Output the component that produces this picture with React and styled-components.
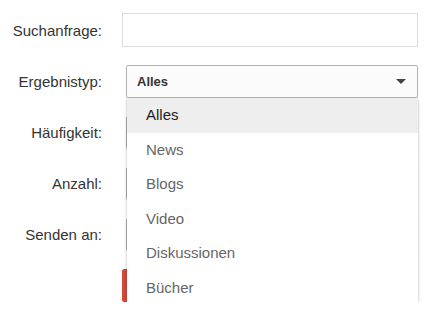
import React from 'react';
import styled, { createGlobalStyle } from 'styled-components';

const Global = createGlobalStyle`
  html, body {
    margin: 0;
    padding: 0;
    background: #fff;
  }
  body {
    font-family: Arial, "Liberation Sans", sans-serif;
  }
`

const Form = styled.div`
  position: relative;
  display: flex;
  flex-direction: column;
  gap: 18px;
  padding-top: 13px;
  width: 430px;
`

const Row = styled.div`
  display: grid;
  grid-template-columns: 102px 1fr;
  column-gap: ${p => p.$indent ? 24 : 20}px;
  align-items: center;
  padding-right: 12px;
`

const Label = styled.label`
  text-align: right;
  font-size: 15px;
  color: #333;
`

const TextInput = styled.div`
  height: 32px;
  border: 1px solid #dcdcdc;
  background: #fff;
`

const Select = styled.div`
  position: relative;
  display: flex;
  align-items: center;
  justify-content: space-between;
  height: 31px;
  padding: 0 10px;
  border: 1px solid #b4b4b4;
  border-radius: 2px;
  background: #fbfbfb;
  box-shadow: 0 1px 1px rgba(0, 0, 0, 0.08);
  font-size: 13px;
  font-weight: bold;
  color: #333;
`

const Caret = styled.span`
  width: 0;
  height: 0;
  margin-left: auto;
  border-left: 5px solid transparent;
  border-right: 5px solid transparent;
  border-top: 5px solid #444;
  margin-right: 1px;
`

const ButtonRow = styled.div`
  padding-left: 122px;
`

const Submit = styled.div`
  width: 90px;
  height: 33px;
  background: #d5463a;
  border-radius: 2px;
`

const Menu = styled.ul`
  position: absolute;
  top: 98px;
  left: 127px;
  width: 291px;
  margin: 0;
  padding: 0 0 6px;
  list-style: none;
  background: #fff;
  box-shadow: 0 2px 3px rgba(0, 0, 0, 0.25), 0 0 1px rgba(0, 0, 0, 0.15);
`

const Option = styled.li`
  height: 34.5px;
  line-height: 34.5px;
  padding-left: 19px;
  font-size: 15px;
  color: ${p => p.$active ? '#222' : '#666'};
  background: ${p => p.$active ? '#eeeeee' : '#fff'};
`

const options = ['Alles', 'News', 'Blogs', 'Video', 'Diskussionen', 'Bücher'];

export default function App() {
  return (
    <>
      <Global />
      <Form>
        <Row>
          <Label>Suchanfrage:</Label>
          <TextInput />
        </Row>
        <Row $indent>
          <Label>Ergebnistyp:</Label>
          <Select>
            <span>Alles</span>
            <Caret />
          </Select>
        </Row>
        <Row $indent>
          <Label>Häufigkeit:</Label>
          <Select>
            <Caret />
          </Select>
        </Row>
        <Row $indent>
          <Label>Anzahl:</Label>
          <Select>
            <Caret />
          </Select>
        </Row>
        <Row $indent>
          <Label>Senden an:</Label>
          <Select>
            <Caret />
          </Select>
        </Row>
        <ButtonRow>
          <Submit />
        </ButtonRow>
        <Menu>
          {options.map((o, i) => (
            <Option key={o} $active={i === 0}>{o}</Option>
          ))}
        </Menu>
      </Form>
    </>
  );
}
